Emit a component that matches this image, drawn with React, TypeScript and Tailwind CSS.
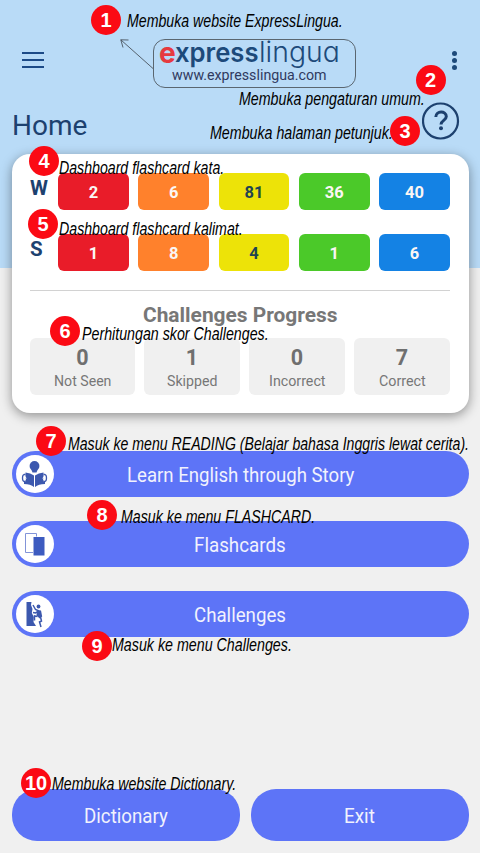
import { useLayoutEffect, useRef, useState } from "react";

type FitProps = { text: string; width: number; className: string };

/** Single line of text condensed or widened horizontally to a set width. */
function Fit({ text, width, className }: FitProps) {
  const ref = useRef<HTMLSpanElement>(null);
  const [scale, setScale] = useState(1);
  useLayoutEffect(() => {
    const el = ref.current;
    if (el) setScale(width / el.offsetWidth);
  }, [text, width]);
  return (
    <span className="block whitespace-nowrap" style={{ width }}>
      <span ref={ref} className={"block w-max origin-left " + className} style={{ transform: `scaleX(${scale})` }}>
        {text}
      </span>
    </span>
  );
}

const notes = [
  { n: 1, cx: 106, cy: 20, x: 127, y: 21, w: 216, t: "Membuka website ExpressLingua." },
  { n: 2, cx: 430.5, cy: 79.5, x: 239, y: 99, w: 186, t: "Membuka pengaturan umum." },
  { n: 3, cx: 405, cy: 130.5, x: 210, y: 133, w: 183, t: "Membuka halaman petunjuk." },
  { n: 4, cx: 44, cy: 161, x: 59, y: 168, w: 165, t: "Dashboard flashcard kata." },
  { n: 5, cx: 43, cy: 224, x: 59, y: 229, w: 184, t: "Dashboard flashcard kalimat." },
  { n: 6, cx: 65, cy: 331, x: 82, y: 334, w: 187, t: "Perhitungan skor Challenges." },
  { n: 7, cx: 51, cy: 441, x: 68, y: 444, w: 401, t: "Masuk ke menu READING (Belajar bahasa Inggris lewat cerita)." },
  { n: 8, cx: 102, cy: 515, x: 121, y: 517, w: 194, t: "Masuk ke menu FLASHCARD." },
  { n: 9, cx: 97, cy: 646, x: 112, y: 645, w: 180, t: "Masuk ke menu Challenges." },
  { n: 10, cx: 36, cy: 783, x: 52, y: 784, w: 184, t: "Membuka website Dictionary." },
];

function Notes() {
  return (
    <>
      {notes.map((a) => (
        <div key={a.n}>
          <div
            className="absolute flex h-[30px] w-[30px] items-center justify-center rounded-full bg-[#fb0a14] font-['Liberation_Sans',sans-serif] text-[20px] leading-none font-bold text-white"
            style={{ left: a.cx - 15, top: a.cy - 15 }}
          >
            {a.n}
          </div>
          <div className="absolute" style={{ left: a.x, top: a.y - 12 }}>
            <Fit
              text={a.t}
              width={a.w}
              className="font-['Liberation_Sans',sans-serif] text-[17.5px] leading-6 text-black italic"
            />
          </div>
        </div>
      ))}
    </>
  );
}

const tiles = ["bg-[#e91c29]", "bg-[#ff812c]", "bg-[#ede308]", "bg-[#4bc929]", "bg-[#1482e4]"];

function TileRow({ label, values }: { label: string; values: number[] }) {
  return (
    <div className="flex h-[37px]">
      <div className="w-7 text-[20.5px] leading-[30px] font-bold text-[#1d416f]">{label}</div>
      <div className="grid flex-1 grid-cols-5 gap-[9.4px]">
        {values.map((v, i) => (
          <div
            key={i}
            className={`flex items-center justify-center rounded-md pt-[3px] text-[16.5px] font-bold ${tiles[i]} ${i === 2 ? "text-[#1f4450]" : "text-[#fbf6f4]"}`}
          >
            {v}
          </div>
        ))}
      </div>
    </div>
  );
}

function ReadIcon() {
  return (
    <svg viewBox="0 0 38 38" className="h-[38px] w-[38px]" fill="#3c58ae">
      <circle cx="18.5" cy="11" r="4.9" />
      <path d="M15.5 15h6l-1 2.500h-4z" />
      <path d="M9.500 17.500q5 .3 8.500 3V32q-3.500-2.800-10-3v-2.500h1.500zM27.500 17.500q-5 .3-8.500 3V32q3.500-2.800 10-3v-2.500h-1.500z" />
      <path d="M9.500 19.500h-1.500q-1.500 .5-1.500 3.500t1.500 3.500h1.500M27.500 19.500h1.500q1.500 .5 1.500 3.500t-1.500 3.500h-1.500" fill="none" stroke="#3c58ae" strokeWidth="1.3" />
      <path d="M9 21.500q2 1.500 0 3.500M28 21.500q-2 1.500 0 3.500" fill="none" stroke="#fff" strokeWidth="1" />
    </svg>
  );
}

function CardsIcon() {
  return (
    <svg viewBox="0 0 38 38" className="h-[38px] w-[38px]">
      <path d="M17 27.500H9.500V8.500H20.500V11.500" fill="none" stroke="#8294d8" strokeWidth="1" />
      <rect x="17.500" y="12" width="11" height="18.500" fill="#3d5bc0" />
    </svg>
  );
}

function ClimbIcon() {
  return (
    <svg viewBox="0 0 38 38" className="h-[38px] w-[38px]">
      <path d="M10.500 7h5l-.5 3 1.500 4-.7 4 2 4-.3 5 2.500 4h-9.500z" fill="#3c58ae" />
      <circle cx="22.500" cy="11.500" r="1.900" fill="#3c58ae" />
      <path d="M21 15l4 .5 1.200 6-2.500 2-3.200-3z" fill="#3c58ae" />
      <path d="M17 10l2.500 4.500 3.500 1.500M17 17.500l2.500 .5 2.500-1.500M21.500 21.500l-3-.500v4.500M24.500 22l1 4-2 1 1.500 5" fill="none" stroke="#3c58ae" strokeWidth="1.500" />
    </svg>
  );
}

const menu = [
  { label: "Learn English through Story", width: 227, Icon: ReadIcon },
  { label: "Flashcards", width: 91.5, Icon: CardsIcon },
  { label: "Challenges", width: 92, Icon: ClimbIcon },
];

const scores = [
  { v: 0, label: "Not Seen", w: 57.5 },
  { v: 1, label: "Skipped", w: 50.5 },
  { v: 0, label: "Incorrect", w: 57 },
  { v: 7, label: "Correct", w: 47 },
];

export default function App() {
  return (
    <div className="relative h-[853px] w-[480px] overflow-hidden bg-[#f0f0f0] font-[Roboto,sans-serif]">
      <header className="h-[268px] bg-[#b9dbf7] px-3 pt-[39px]">
        <div className="flex h-12 items-start">
          <div className="mt-[13px] ml-[9.5px] flex w-[22px] flex-col gap-[4.5px]">
            <div className="h-[2.4px] bg-[#1c4a87]" />
            <div className="h-[2.4px] bg-[#1c4a87]" />
            <div className="h-[2.4px] bg-[#1c4a87]" />
          </div>
          <div className="ml-[109px] h-[49px] w-[203px] rounded-xl border border-[#5a6670] pl-[5px]">
            <div className="-mt-[4px] flex h-[32px] items-center font-[Inter,sans-serif] text-[#1d4a7a] [font-feature-settings:'cv11']">
              <Fit text="e" width={16.5} className="text-[29px] leading-[33px] font-bold text-[#e63a40]" />
              <Fit text="xpress" width={83.5} className="text-[27px] leading-[33px] font-semibold" />
              <Fit text="lingua" width={81} className="text-[28px] leading-[33px] font-light" />
            </div>
            <div className="ml-[13px]">
              <Fit text="www.expresslingua.com" width={155} className="text-[14.5px] leading-4 text-[#303a60]" />
            </div>
          </div>
          <div className="mt-[12px] ml-[96px] flex flex-col gap-[2px]">
            <div className="h-[5px] w-[5px] rounded-full bg-[#1d4a7a]" />
            <div className="h-[5px] w-[5px] rounded-full bg-[#1d4a7a]" />
            <div className="h-[5px] w-[5px] rounded-full bg-[#1d4a7a]" />
          </div>
        </div>
        <div className="mt-[15px] flex justify-between pr-2">
          <div className="pt-[6px]">
            <Fit text="Home" width={75} className="text-[28px] leading-[35px] text-[#1d416f]" />
          </div>
          <svg viewBox="0 0 38 38" className="h-[38px] w-[38px]" fill="none" stroke="#1d416f">
            <circle cx="18.5" cy="19" r="17.5" strokeWidth="2.2" />
            <path d="M13.8 15c0-6.500 10.500-6.500 10.500-.5 0 4-5.300 3.800-5.300 8" strokeWidth="3" />
            <circle cx="19" cy="26.300" r="2" fill="#1d416f" stroke="none" />
          </svg>
        </div>
      </header>

      <section className="relative mx-[11.5px] -mt-[114px] h-[259px] rounded-[18px] bg-white px-[18.5px] pt-[19px] shadow-[0_3px_12px_rgba(0,0,0,0.4)]">
        <TileRow label="W" values={[2, 6, 81, 36, 40]} />
        <div className="h-6" />
        <TileRow label="S" values={[1, 8, 4, 1, 6]} />
        <div className="mt-[19px] h-px bg-[#d2d2d2]" />
        <div className="mt-[11px] flex justify-center">
          <Fit text="Challenges Progress" width={194} className="text-[21px] leading-[26px] font-bold text-[#777]" />
        </div>
        <div className="mt-[9.5px] grid h-[57px] grid-cols-[105px_96px_96px_96px] justify-between">
          {scores.map((s) => (
            <div key={s.label} className="flex flex-col items-center rounded-md bg-[#f0f0f0] pt-[7px] text-[#777]">
              <div className="text-[21.5px] leading-[26px] font-bold text-[#6f6f6f]">{s.v}</div>
              <Fit text={s.label} width={s.w} className="text-[14px] leading-5" />
            </div>
          ))}
        </div>
      </section>

      <nav className="mx-[11.5px] mt-[37.5px] flex flex-col gap-[23.5px]">
        {menu.map(({ label, width, Icon }) => (
          <div key={label} className="flex h-[46.5px] items-center rounded-full bg-[#5d74f7] px-[4.5px]">
            <div className="h-[38px] w-[38px] rounded-full bg-white">
              <Icon />
            </div>
            <div className="flex flex-1 justify-center pt-[5px] pr-[38px]">
              <Fit text={label} width={width} className="text-[19.5px] leading-6 text-[#f1f2fd]" />
            </div>
          </div>
        ))}
      </nav>

      <footer className="mx-[11.5px] mt-[151.5px] flex h-[52px] gap-[11px]">
        <div className="flex w-[228.5px] items-center justify-center rounded-[25px] bg-[#5d74f7] pt-[5px]">
          <Fit text="Dictionary" width={83.5} className="text-[19.5px] leading-6 text-[#f1f2fd]" />
        </div>
        <div className="flex flex-1 items-center justify-center rounded-[25px] bg-[#5d74f7] pt-[5px]">
          <Fit text="Exit" width={31} className="text-[19.5px] leading-6 text-[#f1f2fd]" />
        </div>
      </footer>

      <svg viewBox="0 0 34 31" className="absolute top-[39px] left-[119.5px] h-[31px] w-[34px]" fill="none" stroke="#4a545e" strokeWidth="0.9">
        <path d="M33 29.5L.8 .8M8.500 1L.8 .8 3 8.500" />
      </svg>
      <Notes />
    </div>
  );
}
